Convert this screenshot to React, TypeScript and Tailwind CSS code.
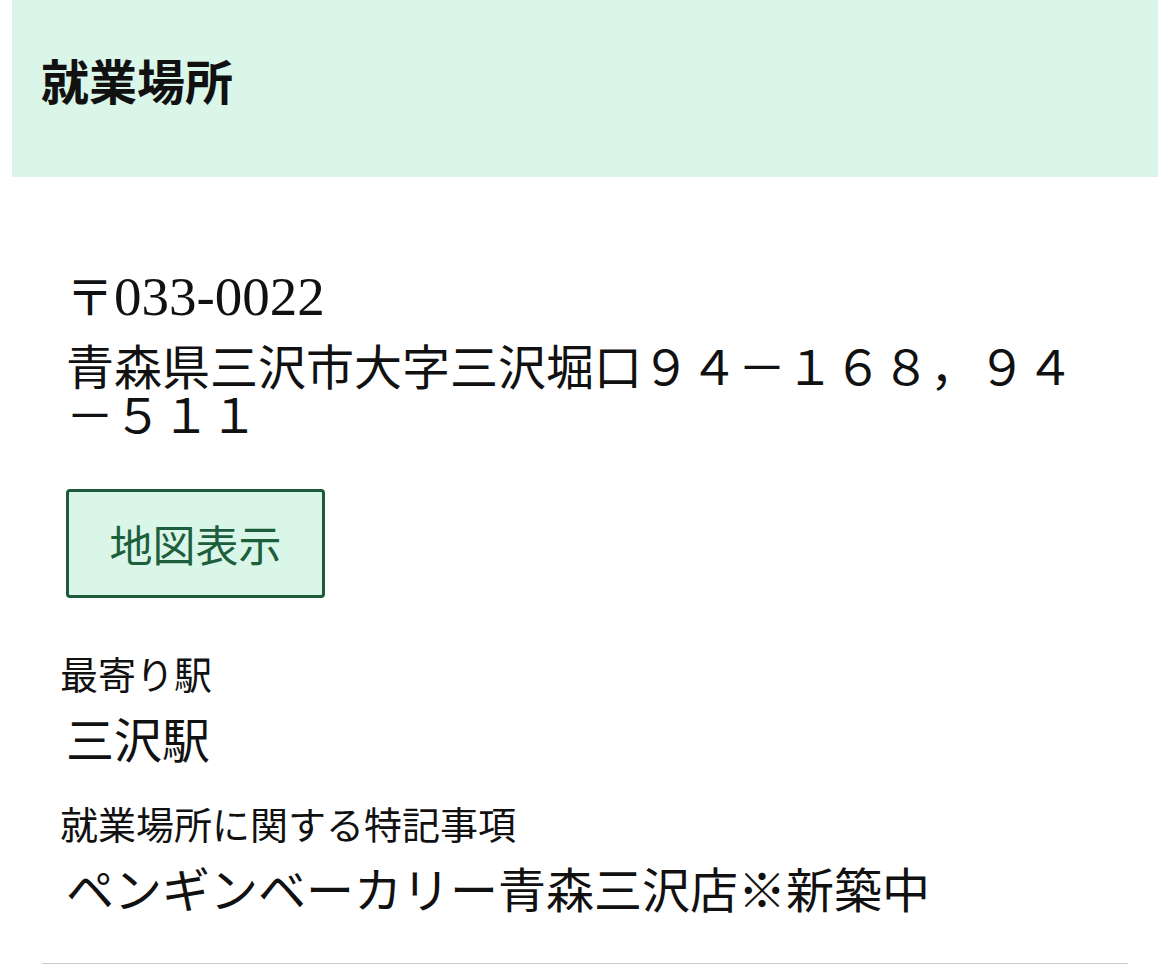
import React from 'react';

const jp = { fontFamily: '"Noto Sans CJK JP", "Noto Sans", sans-serif' };

function Field({ label, value }: { label: string; value: string }) {
  return (
    <>
      <dt className="text-[38px] leading-[38px] text-[#111]">{label}</dt>
      <dd className="ml-[6px] mt-[21px] text-[48px] leading-[48px] text-[#111]">{value}</dd>
    </>
  );
}

export default function App() {
  return (
    <div className="min-h-screen bg-white" style={jp}>
      <section className="mx-3">
        {/* Section heading */}
        <div className="h-[177px] bg-[#daf6e9] pl-[29px] pt-[55px]">
          <h2 className="text-[48px] leading-[48px] font-bold text-[#111]">就業場所</h2>
        </div>

        <div className="px-[30px]">
          <div className="pl-[18px] pr-[18px] pt-[93px]">
            {/* Address */}
            <div className="ml-[6px] text-[#111]">
              <p className="h-[48px] text-[48px] leading-[48px]">
                〒<span className="font-['Liberation_Serif',serif] text-[55px] leading-[48px]">033-0022</span>
              </p>
              <p className="mt-[22px] text-[48px] leading-[48px]">
                青森県三沢市大字三沢堀口９４－１６８，９４－５１１
              </p>
            </div>

            {/* Map button */}
            <button
              type="button"
              className="ml-[6px] mt-[53px] flex h-[109px] w-[259px] items-center justify-center rounded-[4px] border-[3px] border-[#1d5b3c] bg-[#daf6e9] text-[43px] leading-[43px] text-[#1d5e3d]"
            >
              地図表示
            </button>

            <dl className="mt-[56px]">
              <Field label="最寄り駅" value="三沢駅" />
              <div className="mt-[43px]">
                <Field label="就業場所に関する特記事項" value="ペンギンベーカリー青森三沢店※新築中" />
              </div>
            </dl>
          </div>

          <div className="mt-[52px] h-[2px] bg-[#cccccc]" />
        </div>
      </section>
    </div>
  );
}
